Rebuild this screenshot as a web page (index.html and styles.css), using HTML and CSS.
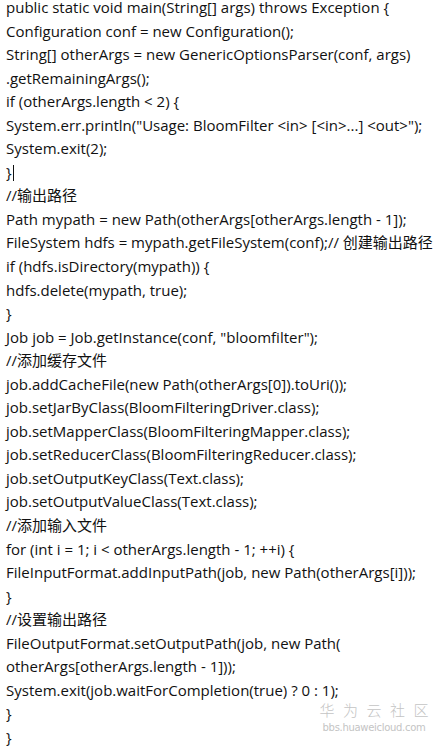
FILE: index.html
```html
<!DOCTYPE html>
<html>
<head>
<meta charset="utf-8">
<link rel="stylesheet" href="styles.css">
</head>
<body>
<div class="code">
<div class="ln first">public static void main(String[] args) throws Exception {</div>
<div class="ln">Configuration conf = new Configuration();</div>
<div class="ln">String[] otherArgs = new GenericOptionsParser(conf, args)</div>
<div class="ln">.getRemainingArgs();</div>
<div class="ln">if (otherArgs.length &lt; 2) {</div>
<div class="ln">System.err.println("Usage: BloomFilter &lt;in&gt; [&lt;in&gt;...] &lt;out&gt;");</div>
<div class="ln">System.exit(2);</div>
<div class="ln">}<span class="caret"></span></div>
<div class="ln">//输出路径</div>
<div class="ln">Path mypath = new Path(otherArgs[otherArgs.length - 1]);</div>
<div class="ln">FileSystem hdfs = mypath.getFileSystem(conf);// 创建输出路径</div>
<div class="ln">if (hdfs.isDirectory(mypath)) {</div>
<div class="ln">hdfs.delete(mypath, true);</div>
<div class="ln">}</div>
<div class="ln">Job job = Job.getInstance(conf, "bloomfilter");</div>
<div class="ln">//添加缓存文件</div>
<div class="ln">job.addCacheFile(new Path(otherArgs[0]).toUri());</div>
<div class="ln">job.setJarByClass(BloomFilteringDriver.class);</div>
<div class="ln">job.setMapperClass(BloomFilteringMapper.class);</div>
<div class="ln">job.setReducerClass(BloomFilteringReducer.class);</div>
<div class="ln">job.setOutputKeyClass(Text.class);</div>
<div class="ln">job.setOutputValueClass(Text.class);</div>
<div class="ln">//添加输入文件</div>
<div class="ln">for (int i = 1; i &lt; otherArgs.length - 1; ++i) {</div>
<div class="ln">FileInputFormat.addInputPath(job, new Path(otherArgs[i]));</div>
<div class="ln">}</div>
<div class="ln">//设置输出路径</div>
<div class="ln">FileOutputFormat.setOutputPath(job, new Path(</div>
<div class="ln">otherArgs[otherArgs.length - 1]));</div>
<div class="ln">System.exit(job.waitForCompletion(true) ? 0 : 1);</div>
<div class="ln">}</div>
<div class="ln">}</div>
</div>
<div class="mark">
<div class="mark-cn">华为云社区</div>
<div class="mark-url">bbs.huaweicloud.com</div>
</div>
</body>
</html>
```
FILE: styles.css
```css
html, body {
  margin: 0;
  padding: 0;
  background: #ffffff;
}
body {
  width: 441px;
  height: 747px;
  overflow: hidden;
  position: relative;
}
.code {
  padding: 0 0 0 6px;
  font-family: "Open Sans", "Noto Sans CJK SC", sans-serif;
  font-size: 15px;
  line-height: 23.55px;
  color: #111111;
  white-space: nowrap;
}
.first {
  line-height: 15.55px;
  padding-bottom: 4px;
}
.caret {
  display: inline-block;
  width: 1px;
  height: 16px;
  background: #111;
  vertical-align: -3px;
  margin-left: 1px;
}
.mark {
  position: absolute;
  left: 318px;
  top: 701px;
  width: 112px;
  display: flex;
  flex-direction: column;
  align-items: center;
  gap: 4px;
  color: #c4c4c4;
  font-family: "Noto Sans CJK SC", sans-serif;
}
.mark-cn {
  font-size: 15px;
  line-height: 17px;
  letter-spacing: 8.5px;
  margin-right: -8.5px;
  font-weight: 300;
}
.mark-url {
  font-family: "DejaVu Sans", sans-serif;
  font-size: 10px;
  line-height: 11px;
  letter-spacing: -0.3px;
}
```
